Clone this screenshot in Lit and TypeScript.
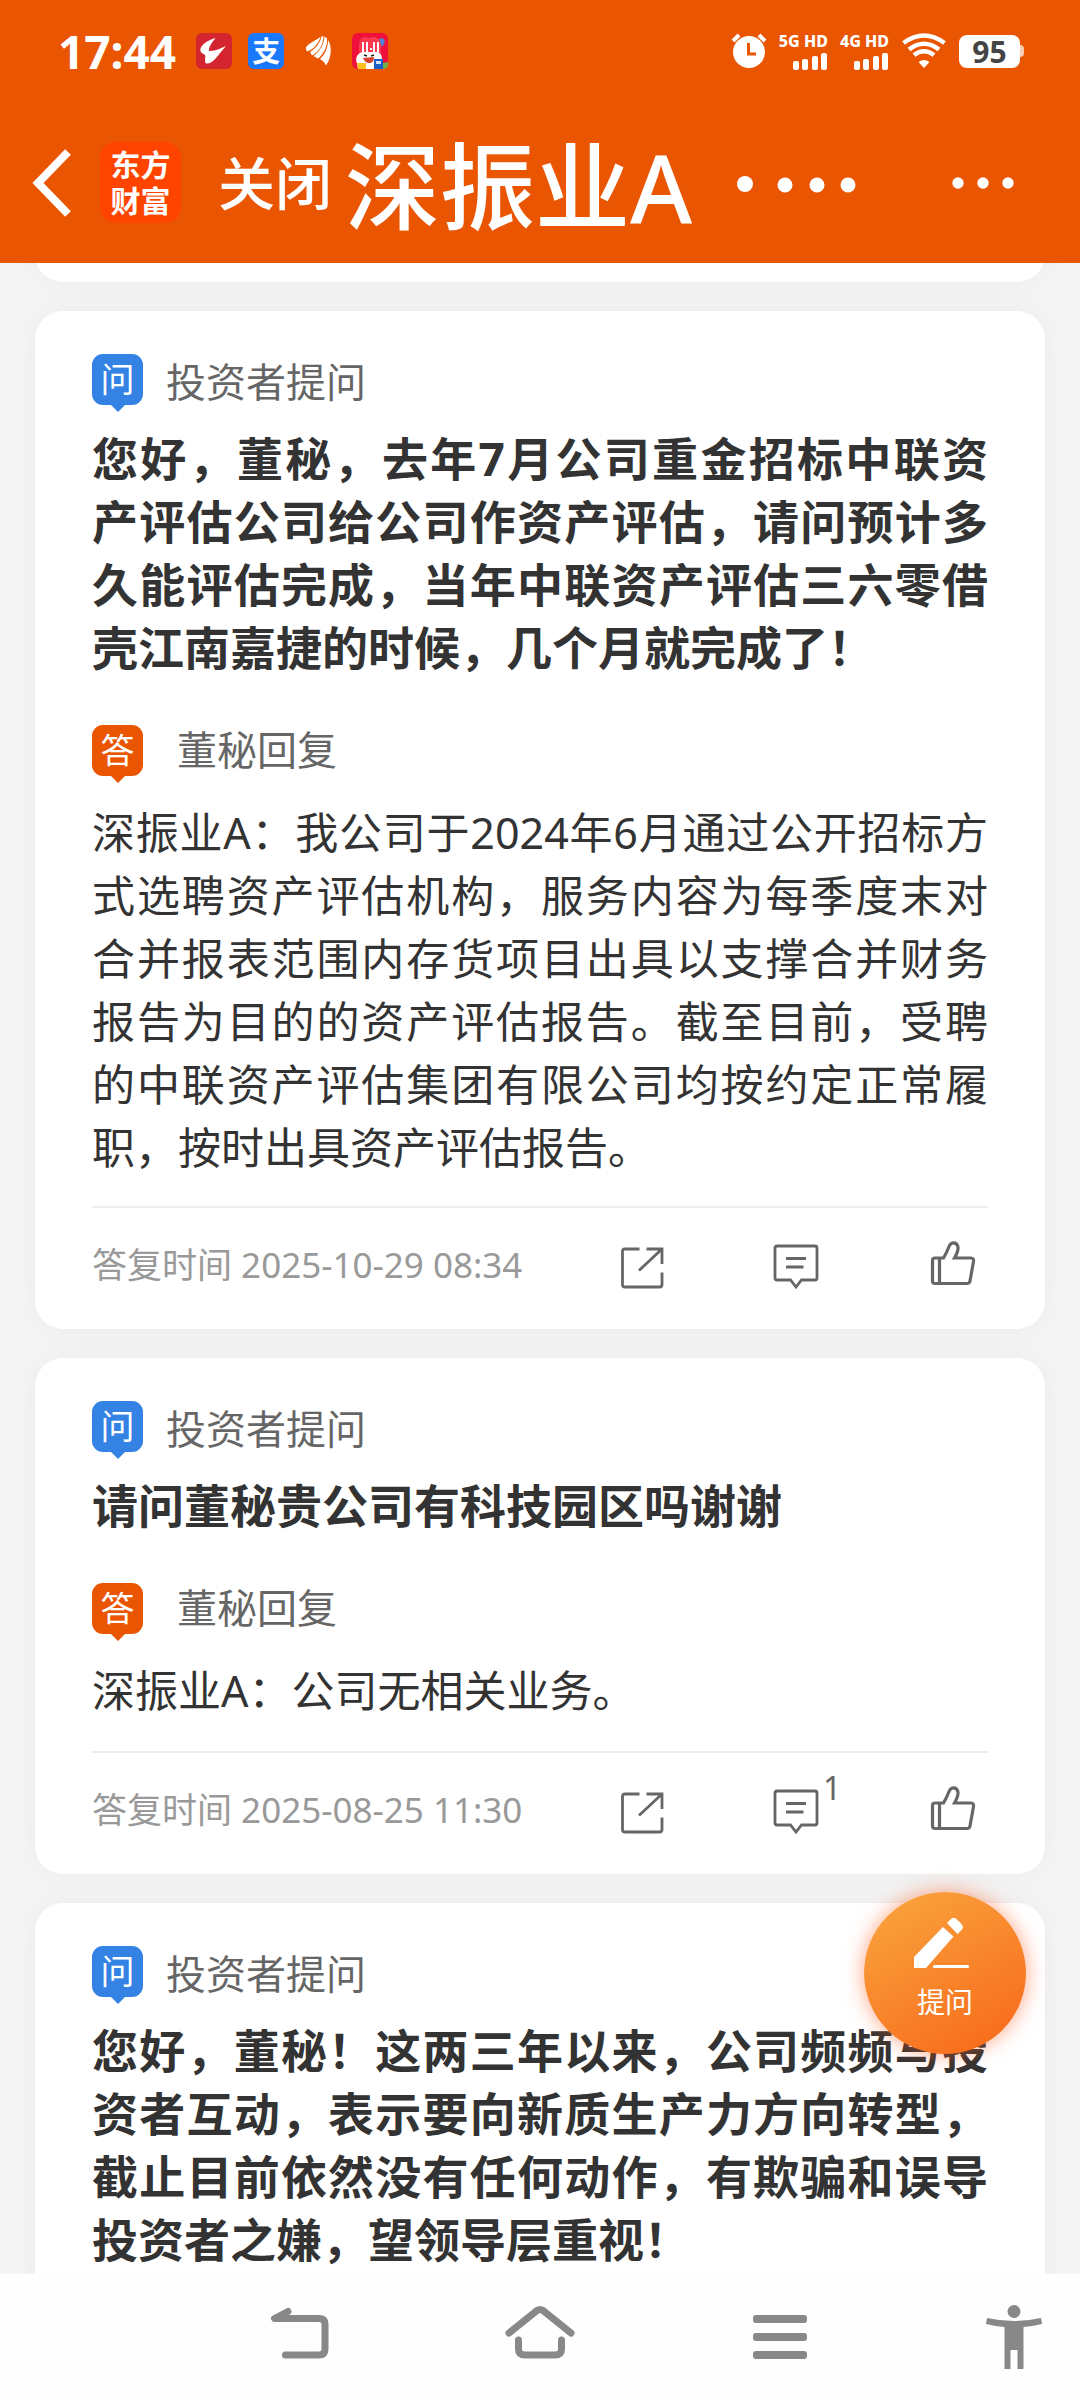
import { LitElement, html, svg, css, nothing } from "lit";
import { customElement, property } from "lit/decorators.js";

interface QaItem {
  question: string;
  answer?: string;
  time?: string;
  comments?: number;
}

const ITEMS: QaItem[] = [
  {
    question:
      "您好，董秘，去年7月公司重金招标中联资产评估公司给公司作资产评估，请问预计多久能评估完成，当年中联资产评估三六零借壳江南嘉捷的时候，几个月就完成了！",
    answer:
      "深振业A：我公司于2024年6月通过公开招标方式选聘资产评估机构，服务内容为每季度末对合并报表范围内存货项目出具以支撑合并财务报告为目的的资产评估报告。截至目前，受聘的中联资产评估集团有限公司均按约定正常履职，按时出具资产评估报告。",
    time: "2025-10-29 08:34",
  },
  {
    question: "请问董秘贵公司有科技园区吗谢谢",
    answer: "深振业A：公司无相关业务。",
    time: "2025-08-25 11:30",
    comments: 1,
  },
  {
    question:
      "您好，董秘！这两三年以来，公司频频与投资者互动，表示要向新质生产力方向转型，截止目前依然没有任何动作，有欺骗和误导投资者之嫌，望领导层重视！",
  },
];

@customElement("status-bar")
export class StatusBar extends LitElement {
  static styles = css`
    :host {
      display: flex;
      align-items: center;
      justify-content: space-between;
      height: 102px;
      padding: 0 56px 0 58px;
      color: #fff;
    }
    .left,
    .right,
    .apps {
      display: flex;
      align-items: center;
    }
    .left {
      gap: 20px;
    }
    .apps {
      gap: 16px;
    }
    .time {
      font-size: 46px;
      line-height: 48px;
      font-weight: 700;
    }
    .right {
      gap: 12px;
    }
    svg {
      display: block;
    }
    .pay {
      display: flex;
      align-items: center;
      justify-content: center;
      width: 36px;
      height: 36px;
      border-radius: 6px;
      background: #1a78fb;
      font-size: 28px;
      line-height: 36px;
      font-weight: 700;
    }
    .net {
      display: flex;
      flex-direction: column;
      align-items: flex-end;
      gap: 4px;
    }
    .net-name {
      font-size: 16px;
      line-height: 16px;
      font-weight: 800;
      white-space: nowrap;
    }
    .battery {
      display: flex;
      align-items: center;
    }
    .cell {
      width: 61px;
      height: 33px;
      border-radius: 8px;
      background: #fff;
      color: #444;
      font-size: 30px;
      line-height: 34px;
      font-weight: 700;
      text-align: center;
    }
    .nub {
      width: 4px;
      height: 12px;
      border-radius: 0 4px 4px 0;
      background: #f9cdb4;
    }
  `;

  private network(name: string) {
    return html`<div class="net">
      <span class="net-name">${name}</span>
      <svg width="36" height="17" viewBox="0 0 36 17" fill="#fff" aria-hidden="true">
        <rect x="1" y="8" width="6" height="9" rx="2" />
        <rect x="10" y="6" width="6" height="11" rx="2" />
        <rect x="20" y="3" width="6" height="14" rx="2" />
        <rect x="29" y="0" width="6" height="17" rx="2" />
      </svg>
    </div>`;
  }

  render() {
    return html`
      <div class="left">
        <span class="time">17:44</span>
        <div class="apps">
          <svg width="36" height="36" viewBox="0 0 36 36" aria-hidden="true">
            <rect width="36" height="36" rx="6" fill="#d3242f" />
            <path
              d="M19.500 5 C11 7.500 5 12 4.300 16.500 C4.500 20 7 20.500 9 22 C10 24.500 8 28 10 30.500 C17 31.500 22 22 30 13 C24 15.500 18.500 18.500 13 18 C12.500 14 16 9.500 19.500 5Z"
              fill="#fff"
            />
          </svg>
          <span class="pay">支</span>
          <svg width="36" height="36" viewBox="0 0 36 36" fill="#fff" aria-hidden="true">
            <path d="M6 14 C10 9.500 15 7.500 20.500 4 C19 9.500 14 16.500 7 18.500 Q5.500 16 6 14Z" />
            <path d="M21.500 3.500 L23.500 3 C23.500 11 19.500 18.500 12 22.500 L10 19 C16 15.500 20 10 21.500 3.500Z" />
            <path d="M24.500 3.500 L27 5.500 C27.500 13 24 21 18 25.500 L13.500 23 C20.500 18 24 11 24.500 3.500Z" />
            <path d="M28 7 C32 13 32 24 26 32.500 Q24 28 20 26 C25.500 21 28 14 28 7Z" />
          </svg>
          <svg width="36" height="36" viewBox="0 0 36 36" aria-hidden="true">
            <rect width="36" height="36" rx="6" fill="#f0103c" />
            <path d="M7 20 V12 Q8 3 14 4 Q16 6 20 4 Q28 3 29 12 V20Z" fill="#fb3a4e" />
            <path d="M27 6 L31 5 L33 9 L30 14Z" fill="#4b86d8" />
            <g fill="#fff">
              <rect x="10" y="9" width="2" height="10" />
              <rect x="14" y="9" width="2" height="10" />
              <rect x="21" y="9" width="2" height="10" />
              <rect x="25" y="9" width="2" height="10" />
              <rect x="18" y="15" width="2" height="2" />
            </g>
            <path d="M4 26 Q5 20 11 19 H26 Q30 21 30 26 V36 H6Z" fill="#fff" />
            <path d="M12 22 L15 23 M19 23 L22 22" stroke="#222" stroke-width="1.500" />
            <path d="M11 25 L22 24 Q22 30 17 30 Q13 30 11 25Z" fill="#d8402c" />
            <rect x="22" y="26" width="9" height="10" fill="#1d5fc4" />
            <path d="M24 28 H29 V31 H24Z" fill="#cfe2ff" />
            <path d="M5 30 H14 V36 H6Z" fill="#ffc01e" />
            <path d="M31 30 L36 29 V32 Q35 36 31 36Z" fill="#6fae4c" />
          </svg>
        </div>
      </div>
      <div class="right">
        <svg width="36" height="36" viewBox="0 0 36 36" aria-hidden="true">
          <path d="M2 8 L8 2 M28 2 L34 8" stroke="#fff" stroke-width="4" />
          <circle cx="18" cy="19" r="16" fill="#fff" />
          <path d="M17.500 10 V21 H25" stroke="#ea5502" stroke-width="3" fill="none" />
        </svg>
        ${this.network("5G HD")} ${this.network("4G HD")}
        <svg width="46" height="36" viewBox="0 0 46 36" aria-hidden="true">
          <g fill="none" stroke="#fff" stroke-width="4.500">
            <path d="M2.500 10 Q23 -5 43.500 10" />
            <path d="M8 16.500 Q23 5 38 16.500" />
            <path d="M13 22 Q23 14.500 33 22" />
          </g>
          <path d="M17.500 29 Q23 25 28.500 29 L23 35Z" fill="#fff" />
        </svg>
        <div class="battery">
          <span class="cell">95</span>
          <span class="nub"></span>
        </div>
      </div>
    `;
  }
}

@customElement("title-bar")
export class TitleBar extends LitElement {
  static styles = css`
    :host {
      display: flex;
      align-items: center;
      height: 161px;
      padding: 0 64px 0 30px;
      color: #fff;
    }
    button {
      display: flex;
      align-items: center;
      margin: 0;
      padding: 0;
      border: 0;
      background: none;
      color: inherit;
      font: inherit;
    }
    svg {
      display: block;
    }
    .brand {
      display: flex;
      align-items: center;
      justify-content: center;
      box-sizing: border-box;
      width: 81px;
      height: 81px;
      margin: 0 37px 0 28px;
      padding: 0 10px;
      border-radius: 16px;
      background: #ff4400;
      font-size: 30px;
      line-height: 36px;
      font-weight: 700;
      text-align: center;
    }
    .close {
      font-size: 57px;
      line-height: 80px;
      font-weight: 500;
    }
    .title {
      margin: 0 0 0 13px;
      padding-top: 6px;
      font-size: 95px;
      line-height: 128px;
      font-weight: 500;
      white-space: nowrap;
    }
    .pager {
      margin-left: 44px;
    }
    .more {
      margin-left: auto;
    }
  `;

  render() {
    return html`
      <button aria-label="返回">
        <svg width="42" height="72" viewBox="0 0 42 72" fill="none" stroke="#fff" stroke-width="8" aria-hidden="true">
          <path d="M38 5 L8 36 L38 67" />
        </svg>
      </button>
      <div class="brand">东方财富</div>
      <button class="close">关闭</button>
      <h1 class="title">深振业A</h1>
      <svg class="pager" width="120" height="20" viewBox="0 0 120 20" fill="#fff" aria-hidden="true">
        <circle cx="9" cy="11" r="8" />
        <circle cx="49" cy="12" r="7.500" />
        <circle cx="81" cy="12" r="7.500" />
        <circle cx="112" cy="12" r="7.500" />
      </svg>
      <button class="more" aria-label="更多">
        <svg width="64" height="16" viewBox="0 0 64 16" fill="#fff" aria-hidden="true">
          <circle cx="6" cy="8" r="5.700" />
          <circle cx="31" cy="8" r="5.700" />
          <circle cx="56" cy="8" r="5.700" />
        </svg>
      </button>
    `;
  }
}

@customElement("qa-card")
export class QaCard extends LitElement {
  @property({ attribute: false }) item!: QaItem;

  static styles = css`
    :host {
      display: block;
    }
    .card {
      padding: 43px 57px 0;
      border-radius: 28px;
      background: #fff;
      box-shadow: 0 0 30px rgba(0, 0, 0, 0.05);
      color: #333;
    }
    .open {
      padding-bottom: 43px;
    }
    .head {
      display: flex;
      align-items: flex-start;
      height: 58px;
      color: #666;
      font-size: 40px;
      line-height: 56px;
    }
    .ask {
      gap: 23px;
    }
    .reply {
      gap: 34px;
      margin-top: 46px;
      line-height: 50px;
    }
    .tag {
      position: relative;
      width: 51px;
      height: 51px;
      border-radius: 11px;
      color: #fff;
      font-size: 34px;
      line-height: 50px;
      text-align: center;
    }
    .tag::after {
      content: "";
      position: absolute;
      top: 50px;
      left: 18px;
      width: 16px;
      height: 8px;
      background: inherit;
      clip-path: polygon(0 0, 100% 0, 50% 100%);
    }
    .ask .tag {
      background: #3482e3;
    }
    .reply .tag {
      background: #ea5502;
    }
    .question {
      margin: 15px 0 0;
      font-size: 46px;
      line-height: 63px;
      font-weight: 700;
      text-align: justify;
    }
    .answer {
      min-height: 65px;
      margin: 18px 0 27px;
      font-size: 43px;
      line-height: 63px;
      text-align: justify;
    }
    .foot {
      display: flex;
      align-items: center;
      justify-content: space-between;
      height: 113px;
      padding: 0 11px 8px 0;
      border-top: 2px solid #eee;
    }
    .time {
      color: #999;
      font-size: 35px;
      line-height: 48px;
      white-space: nowrap;
    }
    .actions {
      display: flex;
      gap: 108px;
    }
    .actions button {
      position: relative;
      margin: 0;
      padding: 0;
      border: 0;
      background: none;
      color: #666;
      font: inherit;
    }
    .actions svg {
      display: block;
    }
    .count {
      position: absolute;
      top: -16px;
      left: 50px;
      font-size: 32px;
      line-height: 36px;
    }
  `;

  private action(label: string, width: number, shape: unknown, count?: number) {
    return html`<button aria-label=${label}>
      <svg
        width="48"
        height="48"
        viewBox="0 0 48 48"
        fill="none"
        stroke="#666"
        stroke-width=${width}
        aria-hidden="true"
      >
        ${shape}
      </svg>
      ${count ? html`<span class="count">${count}</span>` : nothing}
    </button>`;
  }

  render() {
    const { question, answer, time, comments } = this.item;
    return html`
      <article class="card ${answer ? "" : "open"}">
        <div class="head ask"><span class="tag">问</span><span>投资者提问</span></div>
        <h2 class="question">${question}</h2>
        ${answer
          ? html`
              <div class="head reply"><span class="tag">答</span><span>董秘回复</span></div>
              <p class="answer">${answer}</p>
              <div class="foot">
                <time class="time">答复时间 ${time}</time>
                <div class="actions">
                  ${this.action(
                    "分享",
                    2.8,
                    svg`<path d="M22.500 8 H8 Q5.500 8 5.500 10.500 V43.500 Q5.500 46 8 46 H42.500 Q45 46 45 43.500 V31.500" />
                      <path d="M29.500 8 H45 V23 M45 8 L22 29.500" />`,
                  )}
                  ${this.action(
                    "评论",
                    2.8,
                    svg`<path d="M4 5 H42 Q44 5 44 7 V37 Q44 39 42 39 H28.500 L23 46 L17.500 39 H4 Q2 39 2 37 V7 Q2 5 4 5Z" />
                      <path d="M13 17.500 H33 M13 26 H30.500" stroke-width="3" />`,
                    comments,
                  )}
                  ${this.action(
                    "点赞",
                    3.2,
                    svg`<path d="M10.500 17 H6 Q3.500 17 3.500 19.500 V40 Q3.500 42.500 6 42.500 H38 Q40.500 42.500 41 40 L44.500 20.500 Q45 17 42 17 H25.500 Q29.500 10 29 6 Q28 1.800 24.500 1.800 Q22 1.800 20.500 4.500 Q17.500 12 14.500 17 H10.500 V42.500" />`,
                  )}
                </div>
              </div>
            `
          : nothing}
      </article>
    `;
  }
}

@customElement("system-nav")
export class SystemNav extends LitElement {
  static styles = css`
    :host {
      display: grid;
      grid-template-columns: 3fr 4fr 4fr 4fr 3fr;
      align-items: center;
      justify-items: center;
      height: 126px;
      background: #fefefe;
    }
    button {
      margin: 0;
      padding: 0;
      border: 0;
      background: none;
    }
    .back {
      grid-column: 2;
    }
    .access {
      justify-self: end;
      padding-right: 36px;
    }
    svg {
      display: block;
    }
  `;

  render() {
    return html`
      <button class="back" aria-label="返回">
        <svg width="60" height="66" viewBox="0 0 60 66" fill="none" stroke="#888" stroke-width="7" stroke-linecap="round" stroke-linejoin="round" aria-hidden="true">
          <path d="M18 7.500 L4.500 14.500 H49 Q55 14.500 55 20 V45 Q55 51 49 51 H15.500" />
        </svg>
      </button>
      <button aria-label="主页">
        <svg width="72" height="66" viewBox="0 0 72 66" fill="none" stroke="#888" stroke-width="7" stroke-linecap="round" stroke-linejoin="round" aria-hidden="true">
          <path d="M5 29 L33 6.500 Q36 4.500 39 6.500 L67 29" />
          <path d="M14.500 36 V45 Q14.500 51 21 51 H51 Q57.500 51 57.500 45 V36" />
        </svg>
      </button>
      <button aria-label="菜单">
        <svg width="54" height="66" viewBox="0 0 54 66" fill="#888" aria-hidden="true">
          <rect y="11" width="54" height="8" rx="3" />
          <rect y="29" width="54" height="8" rx="3" />
          <rect y="47" width="54" height="8" rx="3" />
        </svg>
      </button>
      <button class="access" aria-label="无障碍">
        <svg width="60" height="66" viewBox="0 0 60 66" fill="#888" aria-hidden="true">
          <circle cx="30" cy="7.500" r="6.500" />
          <path d="M3 14 Q30 20 57 14 L58 20 Q48 22.500 39.500 23 V65 H33.500 V46 H26.500 V65 H20.500 V23 Q12 22.500 2 20Z" />
        </svg>
      </button>
    `;
  }
}

@customElement("app-root")
export class AppRoot extends LitElement {
  static styles = css`
    :host {
      display: flex;
      flex-direction: column;
      position: relative;
      height: 100vh;
      overflow: hidden;
      background: #f5f5f5;
      font-family: "Noto Sans", "Noto Sans CJK SC", sans-serif;
    }
    .top {
      background: #ea5502;
    }
    .feed {
      display: flex;
      flex: 1;
      flex-direction: column;
      gap: 29px;
      min-height: 0;
      padding: 0 35px;
      overflow: hidden auto;
      scrollbar-width: none;
    }
    .previous {
      flex: none;
      height: 60px;
      margin-top: -41px;
      border-radius: 28px;
      background: #fff;
      box-shadow: 0 0 30px rgba(0, 0, 0, 0.05);
    }
    qa-card {
      flex: none;
    }
    .compose {
      position: absolute;
      right: 54px;
      bottom: 346px;
      display: flex;
      flex-direction: column;
      align-items: center;
      gap: 12px;
      width: 162px;
      height: 162px;
      margin: 0;
      padding: 24px 0 0;
      border: 0;
      border-radius: 50%;
      background: linear-gradient(150deg, #f9a23c 8%, #f86c1c 90%);
      box-shadow: 0 0 20px rgba(255, 90, 30, 0.55);
      color: #fff;
      font: inherit;
      font-size: 28px;
      line-height: 40px;
    }
    .compose svg {
      display: block;
    }
  `;

  render() {
    return html`
      <header class="top">
        <status-bar></status-bar>
        <title-bar></title-bar>
      </header>
      <main class="feed">
        <div class="previous"></div>
        ${ITEMS.map((item) => html`<qa-card .item=${item}></qa-card>`)}
      </main>
      <button class="compose">
        <svg width="64" height="54" viewBox="0 0 64 54" fill="#fff" aria-hidden="true">
          <path d="M1 41 L30 11 L40.500 20.500 L13 52 H1Z" />
          <path d="M34 7 L38.500 2.500 Q41 1 43.500 3 L48.500 8 Q51 11 49 13.500 L44.500 18Z" />
          <rect x="20" y="49" width="36" height="3" rx="1" />
        </svg>
        <span>提问</span>
      </button>
      <system-nav></system-nav>
    `;
  }
}
